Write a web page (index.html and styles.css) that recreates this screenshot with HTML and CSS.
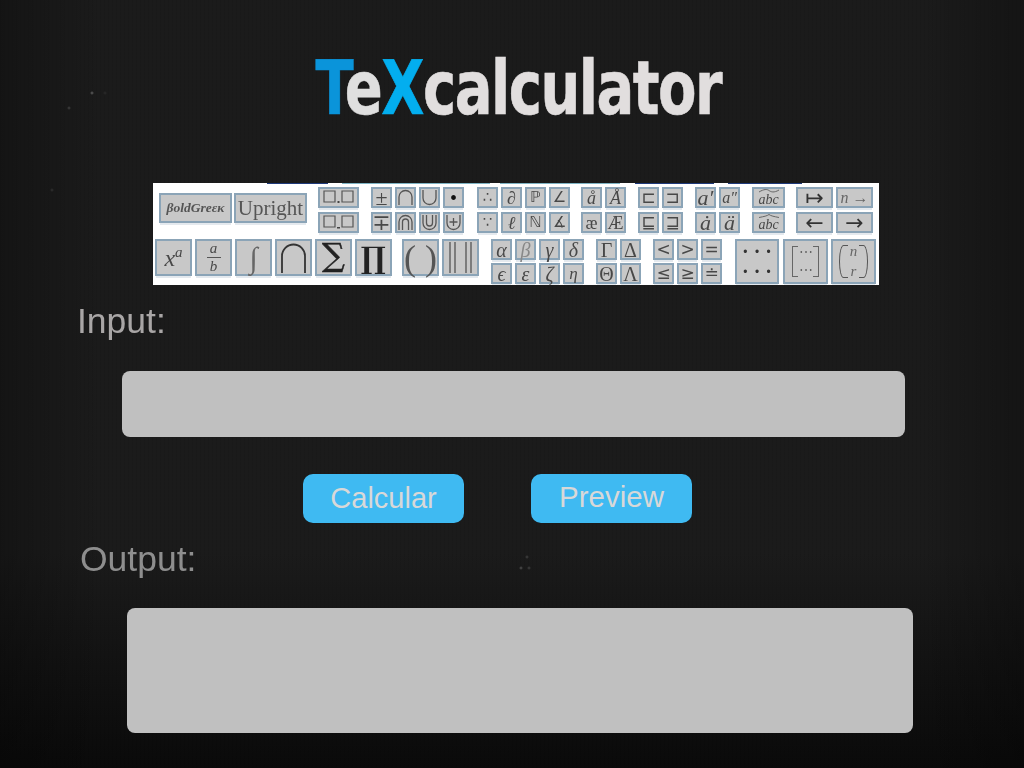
FILE: index.html
```html
<!DOCTYPE html>
<html lang="es">
<head>
<meta charset="utf-8">
<title>TeXcalculator</title>
<link rel="stylesheet" href="styles.css">
</head>
<body>
<main class="page">
  <h1 class="logo"><span class="logo-inner"><span class="t">T</span><span class="e">e</span><span class="x">X</span><span class="rest">calculator</span></span></h1>

  <div class="toolbar">
    <div class="row row-top">
      <div class="grp-wide">
        <span class="b wide bg">βoldGreεκ</span>
        <span class="b wide up">Upright</span>
      </div>
      <div class="grp ml11">
        <span class="b w41"><svg class="ic" width="37" height="17" viewBox="0 0 37 17"><path d="M4 2h11v11H4zM22 2h11v11H22z" fill="none" stroke="#555" stroke-width="1.200"/><rect x="17.500" y="12" width="2" height="2" fill="#444"/></svg></span>
        <span class="b w41"><svg class="ic" width="37" height="17" viewBox="0 0 37 17"><path d="M4 2h11v11H4zM22 2h11v11H22z" fill="none" stroke="#555" stroke-width="1.200"/><rect x="17" y="13" width="3" height="1.500" fill="#444"/></svg></span>
      </div>
      <div class="grp ml12">
        <span class="b pm">±</span><span class="b pm">∓</span>
        <span class="b"><svg class="ic" width="17" height="17" viewBox="0 0 17 17"><path d="M2 16V8a6.500 6.500 0 0 1 13 0v8" fill="none" stroke="#555" stroke-width="1.300"/></svg></span>
        <span class="b"><svg class="ic" width="17" height="17" viewBox="0 0 17 17"><path d="M2 16V8a6.500 6.500 0 0 1 13 0v8M5.500 16V8a3 3 0 0 1 6 0v8" fill="none" stroke="#555" stroke-width="1.300"/></svg></span>
        <span class="b"><svg class="ic" width="17" height="17" viewBox="0 0 17 17"><path d="M2 1v8a6.500 6.500 0 0 0 13 0V1" fill="none" stroke="#555" stroke-width="1.300"/></svg></span>
        <span class="b"><svg class="ic" width="17" height="17" viewBox="0 0 17 17"><path d="M2 1v8a6.500 6.500 0 0 0 13 0V1M5.500 1v8a3 3 0 0 0 6 0V1" fill="none" stroke="#555" stroke-width="1.300"/></svg></span>
        <span class="b dot">•</span>
        <span class="b"><svg class="ic" width="17" height="17" viewBox="0 0 17 17"><path d="M2 1v8a6.500 6.500 0 0 0 13 0V1M8.500 4v8M4.500 8h8" fill="none" stroke="#555" stroke-width="1.300"/></svg></span>
      </div>
      <div class="grp ml13">
        <span class="b dv">∴</span><span class="b dv">∵</span>
        <span class="b it">∂</span><span class="b it">ℓ</span>
        <span class="b dv">ℙ</span><span class="b dv">ℕ</span>
        <span class="b dv">∠</span><span class="b dv">∡</span>
      </div>
      <div class="grp ml11">
        <span class="b it">å</span><span class="b">æ</span>
        <span class="b it">Å</span><span class="b">Æ</span>
      </div>
      <div class="grp ml12">
        <span class="b dv big">⊏</span><span class="b dv big">⊑</span>
        <span class="b dv big">⊐</span><span class="b dv big">⊒</span>
      </div>
      <div class="grp ml12">
        <span class="b it big">a′</span><span class="b it big">ȧ</span>
        <span class="b it sm">a″</span><span class="b it big">ä</span>
      </div>
      <div class="grp ml12">
        <span class="b w33 abc"><svg class="ic" width="22" height="4" viewBox="0 0 22 4"><path d="M1 3C6 0 9 0 11 1.500S16 4 21 1" fill="none" stroke="#666" stroke-width="1"/></svg><span class="abc-t">abc</span></span>
        <span class="b w33 abc"><svg class="ic" width="22" height="4" viewBox="0 0 22 4"><path d="M1 3.500C6 2.500 9 2 11 .5 13 2 16 2.500 21 3.500" fill="none" stroke="#666" stroke-width="1"/></svg><span class="abc-t">abc</span></span>
      </div>
      <div class="grp ml11">
        <span class="b w37 arrow">↦</span><span class="b w37 arrow">←</span>
        <span class="b w37 narrow"><i>n</i><span>→</span></span><span class="b w37 arrow">→</span>
      </div>
    </div>

    <div class="row row-bot">
      <div class="tall-grp">
        <span class="b tall xa"><i>x</i><sup><i>a</i></sup></span>
        <span class="b tall frac"><i>a</i><span class="bar"></span><i>b</i></span>
        <span class="b tall int">∫</span>
        <span class="b tall"><svg class="ic" width="33" height="33" viewBox="0 0 33 33"><path d="M5 32V15a11.500 11.500 0 0 1 23 0v17" fill="none" stroke="#333" stroke-width="1.800"/></svg></span>
        <span class="b tall sum">∑</span>
        <span class="b tall prod">∏</span>
      </div>
      <div class="tall-grp ml10">
        <span class="b tall paren">( )</span>
        <span class="b tall"><svg class="ic" width="33" height="33" viewBox="0 0 33 33"><path d="M6 1v31M11 1v31M22 1v31M27 1v31" fill="none" stroke="#555" stroke-width="1.300"/></svg></span>
      </div>
      <div class="grp grp-tight ml12">
        <span class="b it gk">α</span><span class="b it gk">ϵ</span>
        <span class="b it gk lt">β</span><span class="b it gk">ε</span>
        <span class="b it gk">γ</span><span class="b it gk">ζ</span>
        <span class="b it gk">δ</span><span class="b it gk eta">η</span>
      </div>
      <div class="grp grp-tight ml12">
        <span class="b gk">Γ</span><span class="b gk">Θ</span>
        <span class="b gk">Δ</span><span class="b gk">Λ</span>
      </div>
      <div class="grp grp-tight ml12">
        <span class="b dv big">&lt;</span><span class="b dv big">≤</span>
        <span class="b dv big">&gt;</span><span class="b dv big">≥</span>
        <span class="b dv big">=</span><span class="b dv big">≐</span>
      </div>
      <div class="big-grp ml13">
        <span class="b w44 dots"><span>· · ·</span><span>· · ·</span></span>
        <span class="b w45 ml4 matrix"><span>⋯</span><span>⋯</span></span>
        <span class="b w45 binom"><i>n</i><i>r</i></span>
      </div>
    </div>
  </div>

  <label class="label label-in" for="in">Input:</label>
  <input class="field field-in" id="in" type="text">

  <div class="actions">
    <button class="btn btn-a" type="button">Calcular</button>
    <button class="btn btn-b" type="button">Preview</button>
  </div>

  <label class="label label-out" for="out">Output:</label>
  <textarea class="field field-out" id="out"></textarea>
</main>
</body>
</html>
```
FILE: styles.css
```css
* { box-sizing: border-box; }
html, body { margin: 0; height: 100%; }
body {
  height: 768px;
  overflow: hidden;
  font-family: "Liberation Sans", Arial, sans-serif;
  background-color: #1a1a1a;
  background-image:
    radial-gradient(circle at 92px 93px, #666 0, transparent 2px),
    radial-gradient(circle at 69px 108px, #444 0, transparent 2px),
    radial-gradient(circle at 105px 93px, #2c2c2c 0, transparent 2px),
    radial-gradient(circle at 527px 557px, #444 0, transparent 2px),
    radial-gradient(circle at 521px 568px, #555 0, transparent 2px),
    radial-gradient(circle at 529px 568px, #444 0, transparent 2px),
    radial-gradient(circle at 52px 190px, #333 0, transparent 2px),
    repeating-linear-gradient(90deg, rgba(0,0,0,.06) 0 1px, transparent 1px 4px),
    linear-gradient(90deg, rgba(0,0,0,.25) 0, transparent 10%, transparent 90%, rgba(0,0,0,.25) 100%),
    linear-gradient(180deg, #1b1b1b 0, #1b1b1b 72%, #0a0a0a 100%);
}
.page { display: flex; flex-direction: column; align-items: flex-start; width: 1024px; height: 768px; }

/* logo */
.logo {
  align-self: stretch;
  margin: 53px 0 0;
  height: 70px;
  text-align: center;
  font: bold 74px/70px "DejaVu Sans", sans-serif;
  white-space: nowrap;
  -webkit-text-stroke: .6px currentColor;
}
.logo-inner { display: inline-block; transform: translateX(6.500px) scaleX(.757); letter-spacing: -2px; }
.logo .t { color: #0a94da; }
.logo .e { color: #dfdfdf; }
.logo .x { color: #03aeef; }
.logo .rest { color: #e1dede; }

/* formula palette */
.toolbar {
  width: 726px;
  height: 102px;
  margin: 60px 0 0 153px;
  padding: 4px 0 0;
  background-color: #fff;
  background-image: linear-gradient(90deg,
    transparent 114px, #1f3a7a 114px 175px, transparent 175px 189px,
    #7fb4c4 189px 337px, transparent 337px 347px,
    #7fb4c4 347px 467px, transparent 467px 482px,
    #1f3a7a 482px 561px, transparent 561px 575px,
    #1f3a7a 575px 649px, transparent 649px);
  background-size: 100% 1px;
  background-repeat: no-repeat;
  overflow: hidden;
  font-family: "Liberation Serif", "DejaVu Serif", serif;
  color: #484848;
}
.row { display: flex; }
.row-top { height: 46px; padding-left: 6px; }
.row-bot { margin-top: 6px; padding-left: 2px; }
.grp-wide { display: flex; gap: 2px; align-items: flex-start; padding-top: 6px; height: 46px; }
.grp {
  display: grid;
  grid-auto-flow: column;
  grid-template-rows: 21px 21px;
  row-gap: 4px;
  column-gap: 3px;
  align-content: start;
}
.grp-tight { row-gap: 3px; }
.tall-grp { display: flex; gap: 3px; }
.big-grp { display: flex; gap: 3px; }
.ml4 { margin-left: 1px; }
.ml10 { margin-left: 10px; }
.ml11 { margin-left: 11px; }
.ml12 { margin-left: 12px; }
.ml13 { margin-left: 13px; }

.b {
  display: flex;
  align-items: center;
  justify-content: center;
  width: 21px;
  height: 21px;
  background: #c8c8c8;
  border: 2px solid #8ba4b7;
  box-shadow: 0 3px 0 -1px #e4e9ee;
  font-size: 18px;
  line-height: 1;
  filter: blur(.5px);
}
.ic { display: block; flex: none; }
.wide { width: 73px; height: 30px; }
.bg { font-size: 13.500px; font-style: italic; font-weight: bold; color: #555; }
.up { font-size: 21px; color: #555; }
.w41 { width: 41px; }
.w33 { width: 33px; }
.w37 { width: 37px; }
.it { font-style: italic; }
.pm { font-size: 22px; }
.dv { font-family: "DejaVu Sans", sans-serif; font-size: 15px; }
.dv.big { font-size: 17px; }
.dot { font-size: 20px; color: #111; }
.big { font-size: 22px; }
.sm { font-size: 16px; }
.abc { flex-direction: column; font-style: italic; font-size: 14px; line-height: 12px; gap: 1px; }
.abc-t { display: block; height: 12px; }
.arrow { font-family: "DejaVu Sans", sans-serif; font-size: 22px; color: #333; }
.narrow { font-size: 16px; gap: 4px; color: #666; }
.tall { width: 37px; height: 37px; font-size: 20px; }
.xa { align-items: center; font-size: 24px; }
.xa sup { font-size: 15px; margin-top: -10px; display: block; }
.frac { flex-direction: column; font-size: 15px; gap: 1px; }
.bar { width: 14px; height: 1px; background: #555; }
.int { font-size: 30px; font-style: italic; color: #666; }
.sum { font-family: "DejaVu Serif", serif; font-size: 32px; padding-bottom: 5px; color: #222; -webkit-text-stroke: .5px #222; }
.prod { font-family: "DejaVu Serif", serif; font-weight: bold; font-size: 30px; color: #222; }
.paren { font-size: 36px; font-weight: normal; color: #555; }
.gk { font-size: 20px; }
.eta { font-size: 17px; }
.lt { color: #888; }
.w44, .w45 { height: 45px; }
.w44 { width: 44px; }
.w45 { width: 45px; }
.dots { flex-direction: column; justify-content: space-between; padding: 0 0 4px; font-size: 20px; font-weight: bold; color: #333; }
.matrix { flex-direction: column; gap: 4px; font-size: 14px; color: #666; position: relative; }
.matrix::before, .matrix::after {
  content: "";
  position: absolute;
  top: 5px;
  bottom: 5px;
  width: 5px;
  border: 1px solid #666;
}
.matrix::before { left: 7px; border-right: 0; }
.matrix::after { right: 7px; border-left: 0; }
.binom { flex-direction: column; font-size: 15px; gap: 5px; color: #666; position: relative; }
.binom::before, .binom::after {
  content: "";
  position: absolute;
  top: 4px;
  bottom: 4px;
  width: 8px;
  border: 1px solid #555;
  border-radius: 50%;
}
.binom::before { left: 6px; border-right: 0; border-top-right-radius: 0; border-bottom-right-radius: 0; }
.binom::after { right: 6px; border-left: 0; border-top-left-radius: 0; border-bottom-left-radius: 0; }

/* form */
.label { display: block; font-size: 35.500px; line-height: 40px; will-change: transform; }
.label-in { margin: 16px 0 0 77px; color: #a9a6a6; }
.label-out { margin: 16px 0 0 80px; color: #8e8e8e; }
.field {
  display: block;
  border: 0;
  border-radius: 8px;
  background: #c0c0c0;
  padding: 0;
  outline: none;
  resize: none;
}
.field-in { width: 783px; height: 66px; margin: 30px 0 0 122px; }
.field-out { width: 786px; height: 125px; margin: 29px 0 0 127px; }
.actions { display: flex; gap: 67px; margin: 37px 0 0 303px; }
.btn {
  width: 161px;
  height: 49px;
  border: 0;
  border-radius: 10px;
  background: #3fbaf2;
  color: #d8d8d8;
  font: 29px/49px "Liberation Sans", Arial, sans-serif;
  padding: 0;
}
.btn-b { font-size: 29.500px; line-height: 46px; padding-bottom: 3px; }
```
